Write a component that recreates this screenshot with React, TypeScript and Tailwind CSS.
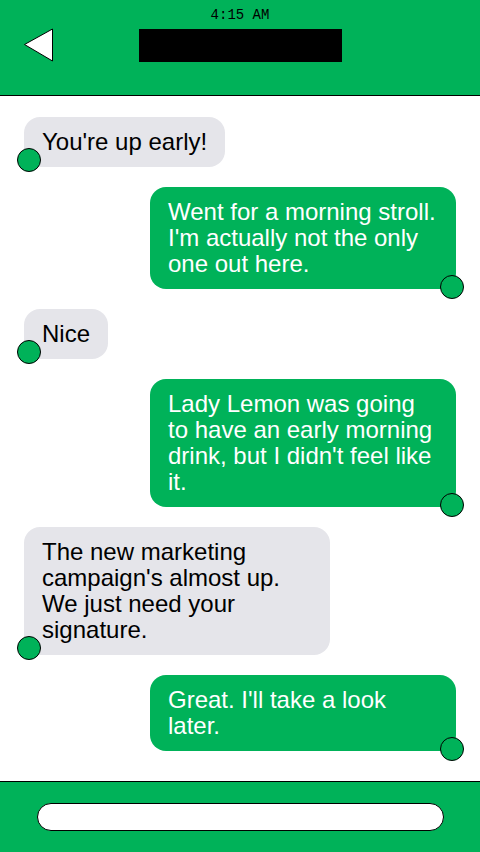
import React from 'react';

const messages = [
  { from: 'them', text: "You're up early!" },
  { from: 'me', text: "Went for a morning stroll. I'm actually not the only one out here." },
  { from: 'them', text: 'Nice' },
  { from: 'me', text: "Lady Lemon was going to have an early morning drink, but I didn't feel like it." },
  { from: 'them', text: "The new marketing campaign's almost up. We just need your signature." },
  { from: 'me', text: "Great. I'll take a look later." },
];

export default function App() {
  return (
    <div className="h-[852px] w-[480px] flex flex-col bg-white overflow-hidden" style={{ fontFamily: '"Liberation Sans", Arial, sans-serif' }}>
      {/* Header */}
      <div className="h-[96px] shrink-0 bg-[#00b259] border-b border-black">
        <div className="pt-[7px] text-center text-[14px] leading-[16px] text-black" style={{ fontFamily: '"Liberation Mono", "Courier New", monospace' }}>
          4:15 AM
        </div>
        <div className="relative mt-[6px] flex justify-center">
          <svg className="absolute left-[23px] top-[-1px]" width="31" height="35" viewBox="0 0 31 35">
            <polygon points="1.5,16.5 29.5,1 29.5,33" fill="white" stroke="black" strokeWidth="1" />
          </svg>
          <div className="ml-[1px] h-[33px] w-[203px] bg-black" />
        </div>
      </div>

      {/* Messages */}
      <div className="flex-1 flex flex-col gap-[20px] px-[24px] pt-[21px]">
        {messages.map((m, i) => (
          <div key={i} className={m.from === 'me' ? 'flex justify-end' : 'flex justify-start'}>
            <div
              className={
                m.from === 'me'
                  ? 'relative max-w-[306px] rounded-[16px] bg-[#00b259] px-[18px] py-[12px] text-[24px] leading-[26px] text-white'
                  : 'relative max-w-[306px] rounded-[16px] bg-[#e5e5ea] px-[18px] py-[12px] text-[24px] leading-[26px] text-black'
              }
            >
              {m.text}
              <span
                className={
                  m.from === 'me'
                    ? 'absolute right-[-8px] bottom-[-10px] h-[24px] w-[24px] rounded-full border border-black bg-[#00b259]'
                    : 'absolute left-[-7px] bottom-[-5px] h-[24px] w-[24px] rounded-full border border-black bg-[#00b259]'
                }
              />
            </div>
          </div>
        ))}
      </div>

      {/* Footer */}
      <div className="h-[71px] shrink-0 bg-[#00b259] border-t border-black px-[37px] pt-[21px]">
        <div className="h-[28px] w-[407px] rounded-full border border-black bg-white" />
      </div>
    </div>
  );
}
